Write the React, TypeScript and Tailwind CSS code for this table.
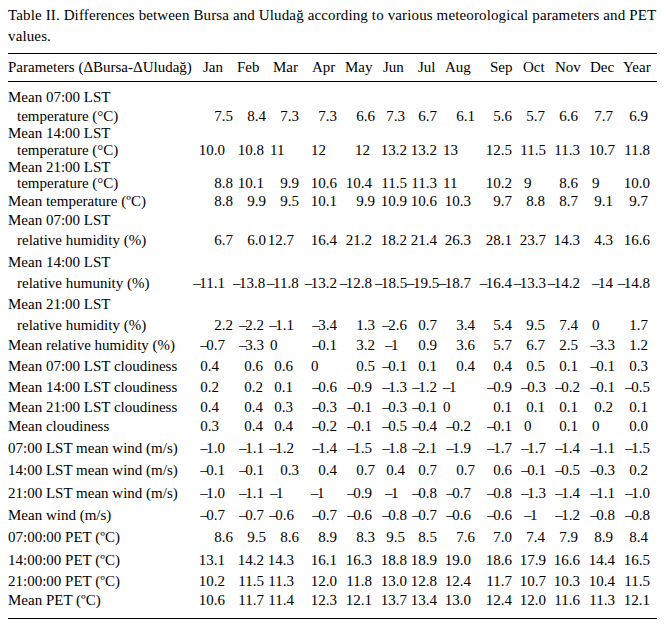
type Col = {
  name: string;
  w: string;
  p3: string;
  pc: string;
  p4: string;
  hp: string;
  ip: string;
};

type Row = {
  label: string[];
  h: string[];
  values: string[];
  cloud?: boolean;
};

const cols: Col[] = [
  { name: "Jan", w: "w-[43px]", p3: "pr-0", pc: "pr-[14px]", p4: "pr-[8px]", hp: "pl-[13px]", ip: "pl-[13px]" },
  { name: "Feb", w: "w-[34px]", p3: "pr-[1px]", pc: "pr-[4px]", p4: "pr-[3px]", hp: "pl-[4px]", ip: "pl-[7px]" },
  { name: "Mar", w: "w-[32px]", p3: "pr-0", pc: "pr-[6px]", p4: "pr-[5px]", hp: "pl-[6px]", ip: "pl-[3px]" },
  { name: "Apr", w: "w-[38px]", p3: "pr-0", pc: "pr-0", p4: "pr-0", hp: "pl-[13px]", ip: "pl-[12px]" },
  { name: "May", w: "w-[38px]", p3: "pr-0", pc: "pr-0", p4: "pr-[3px]", hp: "pl-[8px]", ip: "pl-[18px]" },
  { name: "Jun", w: "w-[32px]", p3: "pr-[2px]", pc: "pr-[2px]", p4: "pr-0", hp: "pl-[8px]", ip: "pl-[10px]" },
  { name: "Jul", w: "w-[30px]", p3: "pr-0", pc: "pr-0", p4: "pr-0", hp: "pl-[11px]", ip: "pl-[5px]" },
  { name: "Aug", w: "w-[38px]", p3: "pr-0", pc: "pr-0", p4: "pr-[4px]", hp: "pl-[8px]", ip: "pl-[6px]" },
  { name: "Sep", w: "w-[37px]", p3: "pr-0", pc: "pr-0", p4: "pr-0", hp: "pl-[15px]", ip: "pl-[15px]" },
  { name: "Oct", w: "w-[34px]", p3: "pr-[1px]", pc: "pr-[1px]", p4: "pr-0", hp: "pl-[11px]", ip: "pl-[12px]" },
  { name: "Nov", w: "w-[36px]", p3: "pr-[4px]", pc: "pr-[4px]", p4: "pr-[2px]", hp: "pl-[9px]", ip: "pl-[11px]" },
  { name: "Dec", w: "w-[33px]", p3: "pr-[2px]", pc: "pr-[2px]", p4: "pr-0", hp: "pl-[8px]", ip: "pl-[10px]" },
  { name: "Year", w: "w-[35px]", p3: "pr-[2px]", pc: "pr-[2px]", p4: "pr-0", hp: "pl-[8px]", ip: "pl-[8px]" },
];

const d = (s: string) => s.split(" ");

const rows: Row[] = [
  { label: ["Mean 07:00 LST", "temperature (°C)"], h: ["h-[19px]", "h-[18px]"], values: d("7.5 8.4 7.3 7.3 6.6 7.3 6.7 6.1 5.6 5.7 6.6 7.7 6.9") },
  { label: ["Mean 14:00 LST", "temperature (°C)"], h: ["h-[16px]", "h-[18px]"], values: d("10.0 10.8 11 12 12 13.2 13.2 13 12.5 11.5 11.3 10.7 11.8") },
  { label: ["Mean 21:00 LST", "temperature (°C)"], h: ["h-[16px]", "h-[17px]"], values: d("8.8 10.1 9.9 10.6 10.4 11.5 11.3 11 10.2 9 8.6 9 10.0") },
  { label: ["Mean temperature (ºC)"], h: ["h-[18px]"], values: d("8.8 9.9 9.5 10.1 9.9 10.9 10.6 10.3 9.7 8.8 8.7 9.1 9.7") },
  { label: ["Mean 07:00 LST", "relative humidity (%)"], h: ["h-[20px]", "h-[21px]"], values: d("6.7 6.0 12.7 16.4 21.2 18.2 21.4 26.3 28.1 23.7 14.3 4.3 16.6") },
  { label: ["Mean 14:00 LST", "relative humunity (%)"], h: ["h-[22px]", "h-[20px]"], values: d("-11.1 -13.8 -11.8 -13.2 -12.8 -18.5 -19.5 -18.7 -16.4 -13.3 -14.2 -14 -14.8") },
  { label: ["Mean 21:00 LST", "relative humidity (%)"], h: ["h-[22px]", "h-[20px]"], values: d("2.2 -2.2 -1.1 -3.4 1.3 -2.6 0.7 3.4 5.4 9.5 7.4 0 1.7") },
  { label: ["Mean relative humidity (%)"], h: ["h-[21px]"], values: d("-0.7 -3.3 0 -0.1 3.2 -1 0.9 3.6 5.7 6.7 2.5 -3.3 1.2") },
  { label: ["Mean 07:00 LST cloudiness"], h: ["h-[21px]"], values: d("0.4 0.6 0.6 0 0.5 -0.1 0.1 0.4 0.4 0.5 0.1 -0.1 0.3"), cloud: true },
  { label: ["Mean 14:00 LST cloudiness"], h: ["h-[21px]"], values: d("0.2 0.2 0.1 -0.6 -0.9 -1.3 -1.2 -1 -0.9 -0.3 -0.2 -0.1 -0.5"), cloud: true },
  { label: ["Mean 21:00 LST cloudiness"], h: ["h-[18px]"], values: d("0.4 0.4 0.3 -0.3 -0.1 -0.3 -0.1 0 0.1 0.1 0.1 0.2 0.1"), cloud: true },
  { label: ["Mean cloudiness"], h: ["h-[21px]"], values: d("0.3 0.4 0.4 -0.2 -0.1 -0.5 -0.4 -0.2 -0.1 0 0.1 0 0.0"), cloud: true },
  { label: ["07:00 LST mean wind (m/s)"], h: ["h-[22px]"], values: d("-1.0 -1.1 -1.2 -1.4 -1.5 -1.8 -2.1 -1.9 -1.7 -1.7 -1.4 -1.1 -1.5") },
  { label: ["14:00 LST mean wind (m/s)"], h: ["h-[23px]"], values: d("-0.1 -0.1 0.3 0.4 0.7 0.4 0.7 0.7 0.6 -0.1 -0.5 -0.3 0.2") },
  { label: ["21:00 LST mean wind (m/s)"], h: ["h-[22px]"], values: d("-1.0 -1.1 -1 -1 -0.9 -1 -0.8 -0.7 -0.8 -1.3 -1.4 -1.1 -1.0") },
  { label: ["Mean wind (m/s)"], h: ["h-[22px]"], values: d("-0.7 -0.7 -0.6 -0.7 -0.6 -0.8 -0.7 -0.6 -0.6 -1 -1.2 -0.8 -0.8") },
  { label: ["07:00:00 PET (ºC)"], h: ["h-[23px]"], values: d("8.6 9.5 8.6 8.9 8.3 9.5 8.5 7.6 7.0 7.4 7.9 8.9 8.4") },
  { label: ["14:00:00 PET (ºC)"], h: ["h-[22px]"], values: d("13.1 14.2 14.3 16.1 16.3 18.8 18.9 19.0 18.6 17.9 16.6 14.4 16.5") },
  { label: ["21:00:00 PET (ºC)"], h: ["h-[20px]"], values: d("10.2 11.5 11.3 12.0 11.8 13.0 12.8 12.4 11.7 10.7 10.3 10.4 11.5") },
  { label: ["Mean PET (ºC)"], h: ["h-[19px]"], values: d("10.6 11.7 11.4 12.3 12.1 13.7 13.4 13.0 12.4 12.0 11.6 11.3 12.1") },
];

const Cell = ({ col, value, cloud }: { col: Col; value: string; cloud?: boolean }) => {
  // integers sit at the column's left, decimals are right aligned
  const neg = value.startsWith("-");
  const num = neg ? value.slice(1) : value;
  const isInt = !value.includes(".");
  const pad = isInt ? col.ip : value.length >= 4 ? col.p4 : cloud ? col.pc : col.p3;
  return (
    <div className={`${col.w} ${pad} shrink-0 whitespace-nowrap ${isInt ? "text-left" : "text-right"}`}>
      {neg ? <span className="mr-[-1.5px]">–</span> : null}
      {num}
    </div>
  );
};

const TableRow = ({ row }: { row: Row }) => {
  const last = row.label.length - 1;
  return (
    <div className="flex flex-col">
      {row.label.map((text, i) => (
        <div key={i} className={`${row.h[i]} flex items-center`}>
          <div className={`w-[182px] shrink-0 whitespace-nowrap ${i > 0 ? "pl-[9px]" : ""}`}>{text}</div>
          {i === last
            ? row.values.map((v, j) => <Cell key={j} col={cols[j]} value={v} cloud={row.cloud} />)
            : null}
        </div>
      ))}
    </div>
  );
};

export default function App() {
  return (
    <div className="w-[667px] h-[626px] bg-white text-black font-[family-name:'Liberation_Serif',serif] text-[15px] overflow-hidden">
      <div className="pl-2 pt-[5px] leading-[21px] whitespace-nowrap tracking-[0.13px]">
        Table II. Differences between Bursa and Uludağ according to various meteorological parameters and PET
        <br />
        values.
      </div>
      <div className="ml-2 mt-[6px] w-[649px] border-t border-b border-black">
        <div className="h-[28px] flex items-center border-b border-black">
          <div className="w-[182px] shrink-0 whitespace-nowrap">Parameters (ΔBursa-ΔUludağ)</div>
          {cols.map((c) => (
            <div key={c.name} className={`${c.w} ${c.hp} shrink-0 whitespace-nowrap`}>
              {c.name}
            </div>
          ))}
        </div>
        <div className="pt-[6px] pb-[8px]">
          {rows.map((r, i) => (
            <TableRow key={i} row={r} />
          ))}
        </div>
      </div>
    </div>
  );
}
